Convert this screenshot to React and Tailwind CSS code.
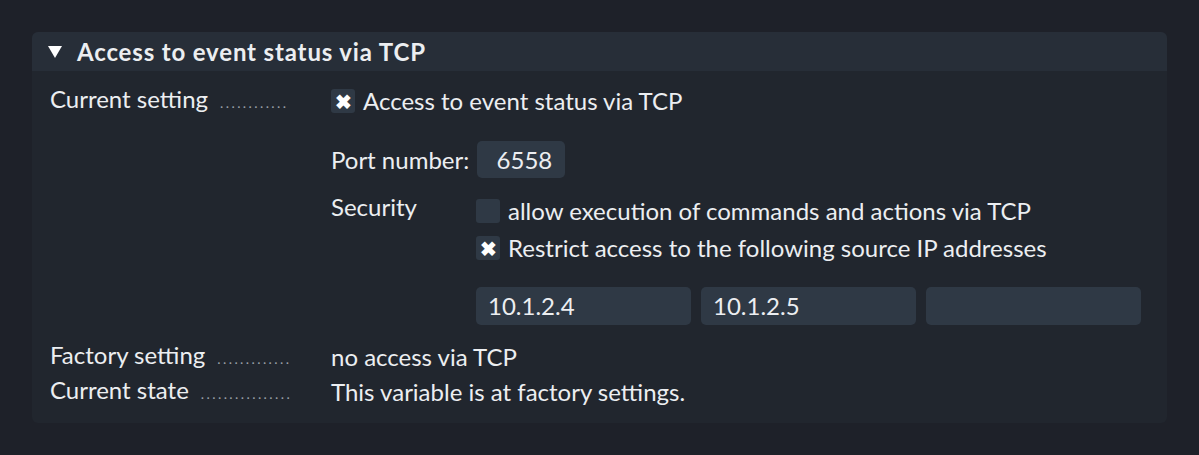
const font = { fontFamily: "Lato, 'Noto Sans', sans-serif" };

function Check({ checked }) {
  return (
    <span className="inline-flex items-center justify-center w-6 h-6 rounded-[3px] bg-[#2f3945] shrink-0">
      {checked && <span className="text-white text-[20px] leading-none font-bold">✖</span>}
    </span>
  );
}

function Label({ text, dots }) {
  return (
    <div className="w-[281px] shrink-0 flex items-baseline whitespace-nowrap">
      <span>{text}</span>
      <span className="ml-[12px] text-[#9aa0a8] text-[14px] tracking-[2.4px]">{dots}</span>
    </div>
  );
}

export default function App() {
  return (
    <div className="min-h-screen bg-[#1e2129] pt-8 px-8 text-[#eceef1] text-[24px] leading-[30px]" style={font}>
      <div className="w-[1135px] rounded-md bg-[#21262e] overflow-hidden">
        <div className="h-[39px] bg-[#272e38] flex items-center pl-4 gap-[15px]">
          <svg width="14" height="12" viewBox="0 0 14 12" className="shrink-0">
            <path d="M0 0 H14 L7 12 Z" fill="#ffffff" />
          </svg>
          <span className="font-bold text-[24px] tracking-[0.85px]">Access to event status via TCP</span>
        </div>
        <div className="px-[18px] pt-[18px] pb-4">
          <div className="flex">
            <div className="h-6 flex items-center">
              <Label text="Current setting" dots="............" />
            </div>
            <div className="flex flex-col">
              <div className="flex items-center gap-2 h-6">
                <Check checked />
                <span>Access to event status via TCP</span>
              </div>
              <div className="flex items-center gap-[8px] mt-[28px] h-[37px]">
                <span>Port number:</span>
                <span className="w-[88px] h-[37px] rounded-[5px] bg-[#2f3945] flex items-center justify-end pr-[13px]">6558</span>
              </div>
              <div className="flex mt-[21px]">
                <span className="w-[145px] leading-[16px]">Security</span>
                <div className="flex flex-col">
                  <div className="flex items-center gap-2 h-6">
                    <Check />
                    <span>allow execution of commands and actions via TCP</span>
                  </div>
                  <div className="flex items-center gap-2 h-6 mt-[13px]">
                    <Check checked />
                    <span>Restrict access to the following source IP addresses</span>
                  </div>
                  <div className="flex gap-[10px] mt-[27px]">
                    {["10.1.2.4", "10.1.2.5", ""].map((v, i) => (
                      <span key={i} className="w-[215px] h-[38px] rounded-[5px] bg-[#2f3945] flex items-center px-3">{v}</span>
                    ))}
                  </div>
                </div>
              </div>
            </div>
          </div>
          <div className="flex items-center h-[30px] mt-[17px]">
            <Label text="Factory setting" dots="............." />
            <span>no access via TCP</span>
          </div>
          <div className="flex items-center h-[30px] mt-[5px]">
            <Label text="Current state" dots="................" />
            <span>This variable is at factory settings.</span>
          </div>
        </div>
      </div>
    </div>
  );
}
